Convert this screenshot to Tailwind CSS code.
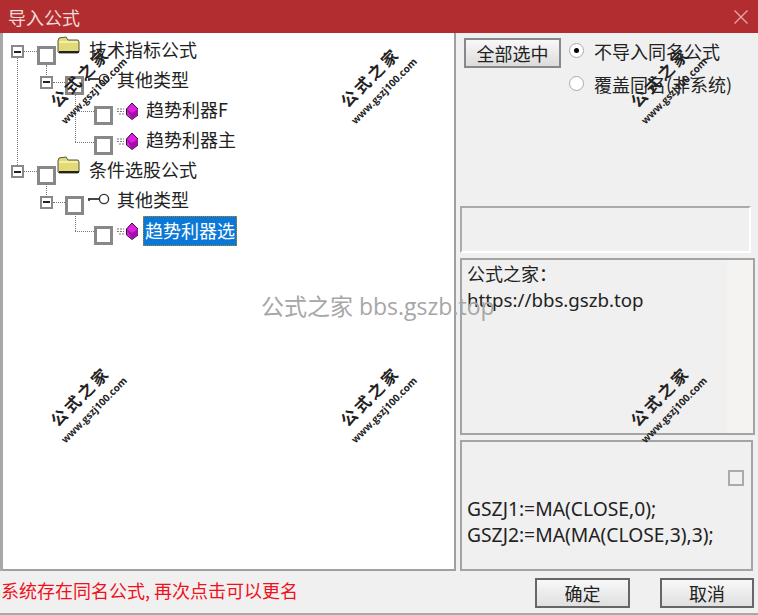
<!DOCTYPE html>
<html lang="zh-CN">
<head>
<meta charset="UTF-8">
<title>导入公式</title>
<script src="https://cdn.jsdelivr.net/npm/@tailwindcss/browser@4"></script>
</head>
<body class="m-0 bg-[#f0f0f0] font-['Noto_Sans_CJK_SC','Noto_Sans',sans-serif] text-[#222]">
<svg width="0" height="0" class="absolute">
  <defs>
    <symbol id="folder" viewBox="0 0 23 18"><path d="M1 5 L2 2 L9 1 L11 4 L21 4 L22 6 L22 16 L21 17 L2 17 L1 16 Z" fill="#e2da78" stroke="#55553f" stroke-width="1"/><path d="M2 6 L21 6" stroke="#f8f4b8" stroke-width="1.5"/><path d="M2 16 L22 16" stroke="#222" stroke-width="2"/></symbol>
    <symbol id="key" viewBox="0 0 23 12"><circle cx="17" cy="6" r="4.6" fill="#fff" stroke="#333" stroke-width="1.4"/><path d="M1 6 H12" stroke="#333" stroke-width="1.8"/><path d="M2 6 V8" stroke="#333" stroke-width="1.6"/></symbol>
    <symbol id="gem" viewBox="0 0 22 18"><path d="M1 7 H8 M1 9.5 H8 M3 12 H8" stroke="#777" stroke-width="1" stroke-dasharray="2 1"/><path d="M16 1 L22 7 L22 13 L16 17.5 L10.5 13 L10.5 7 Z" fill="#e020e0" stroke="#301030" stroke-width="1"/><path d="M10.5 7 L16 11 L22 7 L22 13 L16 17.5 Z" fill="#a010a8"/></symbol>
  </defs>
</svg>

<div class="relative w-[758px] h-[615px] overflow-hidden flex flex-col">
  <!-- title bar -->
  <div class="h-[33px] shrink-0 bg-[#b22d30] flex items-center justify-between pl-2 pr-2">
    <span class="text-[18px] leading-none text-[#f3d9d9]">导入公式</span>
    <svg width="16" height="16" viewBox="0 0 16 16" class="mr-[1px]"><path d="M1.5 1.5 L14.5 14.5 M14.5 1.5 L1.5 14.5" stroke="#e6a9ab" stroke-width="1.3"/></svg>
  </div>

  <div class="flex flex-1 min-h-0 border-l-[3px] border-[#a8a8a8]">
    <!-- tree -->
    <div class="relative w-[453px] h-[538px] bg-white border-r-2 border-b-2 border-[#a0a0a0] text-[18px] leading-[30px] pt-[2px]">
      <div class="h-[30px] flex items-center relative pl-[8px]">
        <span class="w-[13px] h-[13px] border-2 border-[#888] bg-white flex items-center justify-center mt-[3px]"><span class="w-[7px] h-[2px] bg-[#222]"></span></span>
        <span class="w-[13px] border-t border-dotted border-[#777] mt-[3px]"></span>
        <span class="w-[19px] h-[19px] border-[3px] border-[#888] bg-white mt-[10px]"></span>
        <svg class="w-[23px] h-[18px] ml-[1px] -mt-[11px]"><use href="#folder"/></svg>
        <span class="ml-[9px] -mt-[2px]">技术指标公式</span>
      </div>
      <div class="h-[30px] flex items-center relative pl-[37px]">
        <span class="w-[13px] h-[13px] border-2 border-[#888] bg-white flex items-center justify-center mt-[4px]"><span class="w-[7px] h-[2px] bg-[#222]"></span></span>
        <span class="w-[12px] border-t border-dotted border-[#777] mt-[4px]"></span>
        <span class="w-[19px] h-[19px] border-[3px] border-[#888] bg-white mt-[10px]"></span>
        <svg class="w-[23px] h-[12px] ml-[3px] -mt-[2px]"><use href="#key"/></svg>
        <span class="ml-[7px] -mt-[2px]">其他类型</span>
      </div>
      <div class="h-[30px] flex items-center relative pl-[72px]">
        <span class="w-[19px] border-t border-dotted border-[#777] mt-[2px]"></span>
        <span class="w-[19px] h-[19px] border-[3px] border-[#888] bg-white mt-[10px]"></span>
        <svg class="w-[22px] h-[18px] ml-[3px] mt-[2px]"><use href="#gem"/></svg>
        <span class="ml-[8px] -mt-[2px]">趋势利器F</span>
      </div>
      <div class="h-[30px] flex items-center relative pl-[72px]">
        <span class="w-[19px] border-t border-dotted border-[#777] mt-[4px]"></span>
        <span class="w-[19px] h-[19px] border-[3px] border-[#888] bg-white mt-[10px]"></span>
        <svg class="w-[22px] h-[18px] ml-[3px] mt-[2px]"><use href="#gem"/></svg>
        <span class="ml-[8px] -mt-[2px]">趋势利器主</span>
      </div>
      <div class="h-[30px] flex items-center relative pl-[8px]">
        <span class="w-[13px] h-[13px] border-2 border-[#888] bg-white flex items-center justify-center mt-[3px]"><span class="w-[7px] h-[2px] bg-[#222]"></span></span>
        <span class="w-[13px] border-t border-dotted border-[#777] mt-[3px]"></span>
        <span class="w-[19px] h-[19px] border-[3px] border-[#888] bg-white mt-[10px]"></span>
        <svg class="w-[23px] h-[18px] ml-[1px] -mt-[11px]"><use href="#folder"/></svg>
        <span class="ml-[9px] -mt-[2px]">条件选股公式</span>
      </div>
      <div class="h-[30px] flex items-center relative pl-[37px]">
        <span class="w-[13px] h-[13px] border-2 border-[#888] bg-white flex items-center justify-center mt-[4px]"><span class="w-[7px] h-[2px] bg-[#222]"></span></span>
        <span class="w-[12px] border-t border-dotted border-[#777] mt-[4px]"></span>
        <span class="w-[19px] h-[19px] border-[3px] border-[#888] bg-white mt-[10px]"></span>
        <svg class="w-[23px] h-[12px] ml-[3px] -mt-[2px]"><use href="#key"/></svg>
        <span class="ml-[7px] -mt-[2px]">其他类型</span>
      </div>
      <div class="h-[30px] flex items-center relative pl-[72px]">
        <span class="w-[19px] border-t border-dotted border-[#777] mt-[2px]"></span>
        <span class="w-[19px] h-[19px] border-[3px] border-[#888] bg-white mt-[10px]"></span>
        <svg class="w-[22px] h-[18px] ml-[3px] mt-[2px]"><use href="#gem"/></svg>
        <span class="ml-[5px] mt-[1px] h-[30px] leading-[28px] px-[2px] bg-[#0b78d7] text-white outline-1 outline-dotted outline-[#b8860b] -outline-offset-1">趋势利器选</span>
      </div>
      <!-- dotted tree connectors -->
      <span class="absolute left-[14px] top-[25px] h-[107px] border-l border-dotted border-[#777]"></span>
      <span class="absolute left-[43px] top-[32px] h-[10px] border-l border-dotted border-[#777]"></span>
      <span class="absolute left-[72px] top-[61px] h-[48px] border-l border-dotted border-[#777]"></span>
      <span class="absolute left-[43px] top-[151px] h-[13px] border-l border-dotted border-[#777]"></span>
      <span class="absolute left-[72px] top-[181px] h-[17px] border-l border-dotted border-[#777]"></span>
    </div>

    <!-- right column -->
    <div class="flex-1 flex flex-col pl-[4px] pt-[5px] text-[18px]">
      <div class="h-[169px] flex items-start pl-[4px]">
        <button class="w-[97px] h-[30px] border-2 border-[#888] bg-gradient-to-b from-[#f8f8f8] to-[#dcdcdc] text-[18px] leading-none">全部选中</button>
        <div class="ml-[8px] -mt-[4px] flex flex-col">
          <label class="h-[33px] flex items-center gap-[10px]">
            <span class="w-[15px] h-[15px] rounded-full bg-white border border-[#aaa] flex items-center justify-center"><span class="w-[5px] h-[5px] rounded-full bg-black"></span></span>
            <span class="text-[18px] leading-none">不导入同名公式</span>
          </label>
          <label class="h-[33px] flex items-center gap-[10px]">
            <span class="w-[15px] h-[15px] rounded-full bg-white border border-[#aaa]"></span>
            <span class="text-[18px] leading-none">覆盖同名(非系统)</span>
          </label>
        </div>
      </div>
      <div class="w-[291px] h-[47px] border-t-2 border-l-2 border-[#aaa] border-r-2 border-r-white border-b-2 border-b-white"></div>
      <div class="mt-[5px] w-[295px] h-[178px] border-2 border-[#a4a4a4] flex">
        <div class="w-[265px] pl-[5px] pt-[1px] text-[18px] leading-[26px] font-['Noto_Sans','Noto_Sans_CJK_SC',sans-serif]">
          <div>公式之家：</div>
          <div class="text-[18.7px] text-[#222]">https://bbs.gszb.top</div>
        </div>
        <div class="flex-1 bg-[#f5f3f2]"></div>
      </div>
      <div class="mt-[5px] w-[293px] h-[131px] border-2 border-[#a4a4a4] relative flex flex-col justify-end pl-[5px] pb-[21px] text-[19.3px] leading-[26px] font-['Noto_Sans',sans-serif]">
        <span class="absolute right-[7px] top-[28px] w-[16px] h-[16px] border-2 border-[#aaa]"></span>
        <div>GSZJ1:=MA(CLOSE,0);</div>
        <div>GSZJ2:=MA(MA(CLOSE,3),3);</div>
      </div>
    </div>
  </div>

  <!-- status row -->
  <div class="h-[44px] shrink-0 flex items-start border-b-2 border-[#a8a8a8]">
    <span class="text-[#f01020] text-[18px] leading-none ml-[1px] mt-[10px]">系统存在同名公式, 再次点击可以更名</span>
    <div class="ml-auto flex gap-[30px] mr-[4px] mt-[7px]">
      <button class="w-[95px] h-[30px] border-2 border-[#666] bg-gradient-to-b from-[#f8f8f8] to-[#e0e0e0] text-[18px] leading-none">确定</button>
      <button class="w-[94px] h-[30px] border-2 border-[#666] bg-gradient-to-b from-[#f8f8f8] to-[#e0e0e0] text-[18px] leading-none">取消</button>
    </div>
  </div>

  <!-- central watermark -->
  <div class="absolute left-[261px] top-[290px] text-[23px] leading-[32px] text-[#a6a6a6] whitespace-nowrap font-['Open_Sans','Noto_Sans_CJK_SC',sans-serif]">公式之家 bbs.gszb.top</div>

  <!-- diagonal watermarks -->
  <div class="absolute left-[26px] top-[65px] w-[120px] -rotate-45 text-center text-[#222] pointer-events-none"><div class="text-[16px] leading-[19px] tracking-[3px] font-bold">公式之家</div><div class="mt-[4px] text-[10px] leading-[13px] font-bold font-['Open_Sans',sans-serif]">www.gszj100.com</div></div>
  <div class="absolute left-[316px] top-[65px] w-[120px] -rotate-45 text-center text-[#222] pointer-events-none"><div class="text-[16px] leading-[19px] tracking-[3px] font-bold">公式之家</div><div class="mt-[4px] text-[10px] leading-[13px] font-bold font-['Open_Sans',sans-serif]">www.gszj100.com</div></div>
  <div class="absolute left-[606px] top-[65px] w-[120px] -rotate-45 text-center text-[#222] pointer-events-none"><div class="text-[16px] leading-[19px] tracking-[3px] font-bold">公式之家</div><div class="mt-[4px] text-[10px] leading-[13px] font-bold font-['Open_Sans',sans-serif]">www.gszj100.com</div></div>
  <div class="absolute left-[26px] top-[384px] w-[120px] -rotate-45 text-center text-[#222] pointer-events-none"><div class="text-[16px] leading-[19px] tracking-[3px] font-bold">公式之家</div><div class="mt-[4px] text-[10px] leading-[13px] font-bold font-['Open_Sans',sans-serif]">www.gszj100.com</div></div>
  <div class="absolute left-[316px] top-[384px] w-[120px] -rotate-45 text-center text-[#222] pointer-events-none"><div class="text-[16px] leading-[19px] tracking-[3px] font-bold">公式之家</div><div class="mt-[4px] text-[10px] leading-[13px] font-bold font-['Open_Sans',sans-serif]">www.gszj100.com</div></div>
  <div class="absolute left-[606px] top-[384px] w-[120px] -rotate-45 text-center text-[#222] pointer-events-none"><div class="text-[16px] leading-[19px] tracking-[3px] font-bold">公式之家</div><div class="mt-[4px] text-[10px] leading-[13px] font-bold font-['Open_Sans',sans-serif]">www.gszj100.com</div></div>
</div>
</body>
</html>
